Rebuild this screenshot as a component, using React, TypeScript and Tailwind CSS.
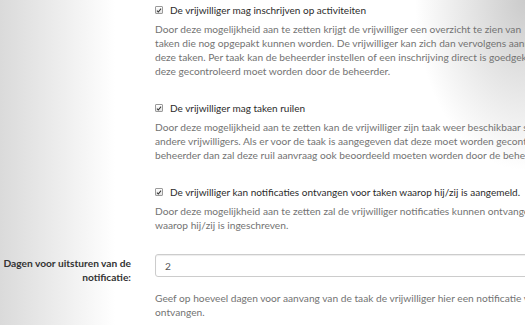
import React from "react";

// Settings form fragment: volunteer options
const options = [
  {
    id: "inschrijven",
    label: "De vrijwilliger mag inschrijven op activiteiten",
    lines: [
      "Door deze mogelijkheid aan te zetten krijgt de vrijwilliger een overzicht te zien van",
      "taken die nog opgepakt kunnen worden. De vrijwilliger kan zich dan vervolgens aanmelden voor",
      "deze taken. Per taak kan de beheerder instellen of een inschrijving direct is goedgekeurd of dat",
      "deze gecontroleerd moet worden door de beheerder.",
    ],
  },
  {
    id: "ruilen",
    label: "De vrijwilliger mag taken ruilen",
    lines: [
      "Door deze mogelijkheid aan te zetten kan de vrijwilliger zijn taak weer beschikbaar stellen voor",
      "andere vrijwilligers. Als er voor de taak is aangegeven dat deze moet worden gecontroleerd door de",
      "beheerder dan zal deze ruil aanvraag ook beoordeeld moeten worden door de beheerder.",
    ],
  },
  {
    id: "notificaties",
    label: "De vrijwilliger kan notificaties ontvangen voor taken waarop hij/zij is aangemeld.",
    lines: [
      "Door deze mogelijkheid aan te zetten zal de vrijwilliger notificaties kunnen ontvangen voor taken",
      "waarop hij/zij is ingeschreven.",
    ],
  },
];

const CheckBox = () => (
  <span className="flex h-[8px] w-[8px] shrink-0 items-center justify-center rounded-[1px] border border-[#9a9a9a] bg-gradient-to-b from-white to-[#e4e4e4]">
    <svg viewBox="0 0 8 8" className="h-[7px] w-[7px]">
      <path d="M1.3 4.2 L3.1 6 L6.7 1.6" fill="none" stroke="#333" strokeWidth="1.4" />
    </svg>
  </span>
);

const App = () => {
  return (
    <div
      className="h-[325px] w-[525px] overflow-hidden bg-[radial-gradient(ellipse_110px_170px_at_100%_0%,#cbcbcb,rgba(255,255,255,0)),linear-gradient(to_right,#dadada,#ffffff_115px)] text-[10.2px] leading-[14px] text-[#333]"
      style={{ fontFamily: "Lato, 'Open Sans', sans-serif" }}
    >
      <div className="flex pt-[3px]">
        <div className="w-[155px] shrink-0" />
        <div className="flex flex-col gap-[23px] whitespace-nowrap">
          {options.map((opt) => (
            <div key={opt.id}>
              <label className="flex items-center gap-[7px]">
                <CheckBox />
                <span className="text-[10px] text-[#2b2b2b]">{opt.label}</span>
              </label>
              <p className="mt-[5px] text-[#737373]">
                {opt.lines.map((line, i) => (
                  <React.Fragment key={i}>
                    {line}
                    <br />
                  </React.Fragment>
                ))}
              </p>
            </div>
          ))}
        </div>
      </div>

      <div className="mt-[22px] flex">
        <label className="w-[155px] shrink-0 pr-[24px] pt-[2px] text-right text-[10.2px] font-bold leading-[14px] text-[#333]">
          Dagen voor uitsturen van de
          <br />
          notificatie:
        </label>
        <div className="flex-1 whitespace-nowrap">
          <div className="flex h-[23px] w-[420px] items-center rounded-[3px] border border-[#cccccc] bg-white px-[9px] text-[#555] shadow-[inset_0_1px_1px_rgba(0,0,0,0.075)]">
            2
          </div>
          <p className="mt-[14px] text-[#737373]">
            Geef op hoeveel dagen voor aanvang van de taak de vrijwilliger hier een notificatie van wil
            <br />
            ontvangen.
          </p>
        </div>
      </div>
    </div>
  );
};

export default App;
